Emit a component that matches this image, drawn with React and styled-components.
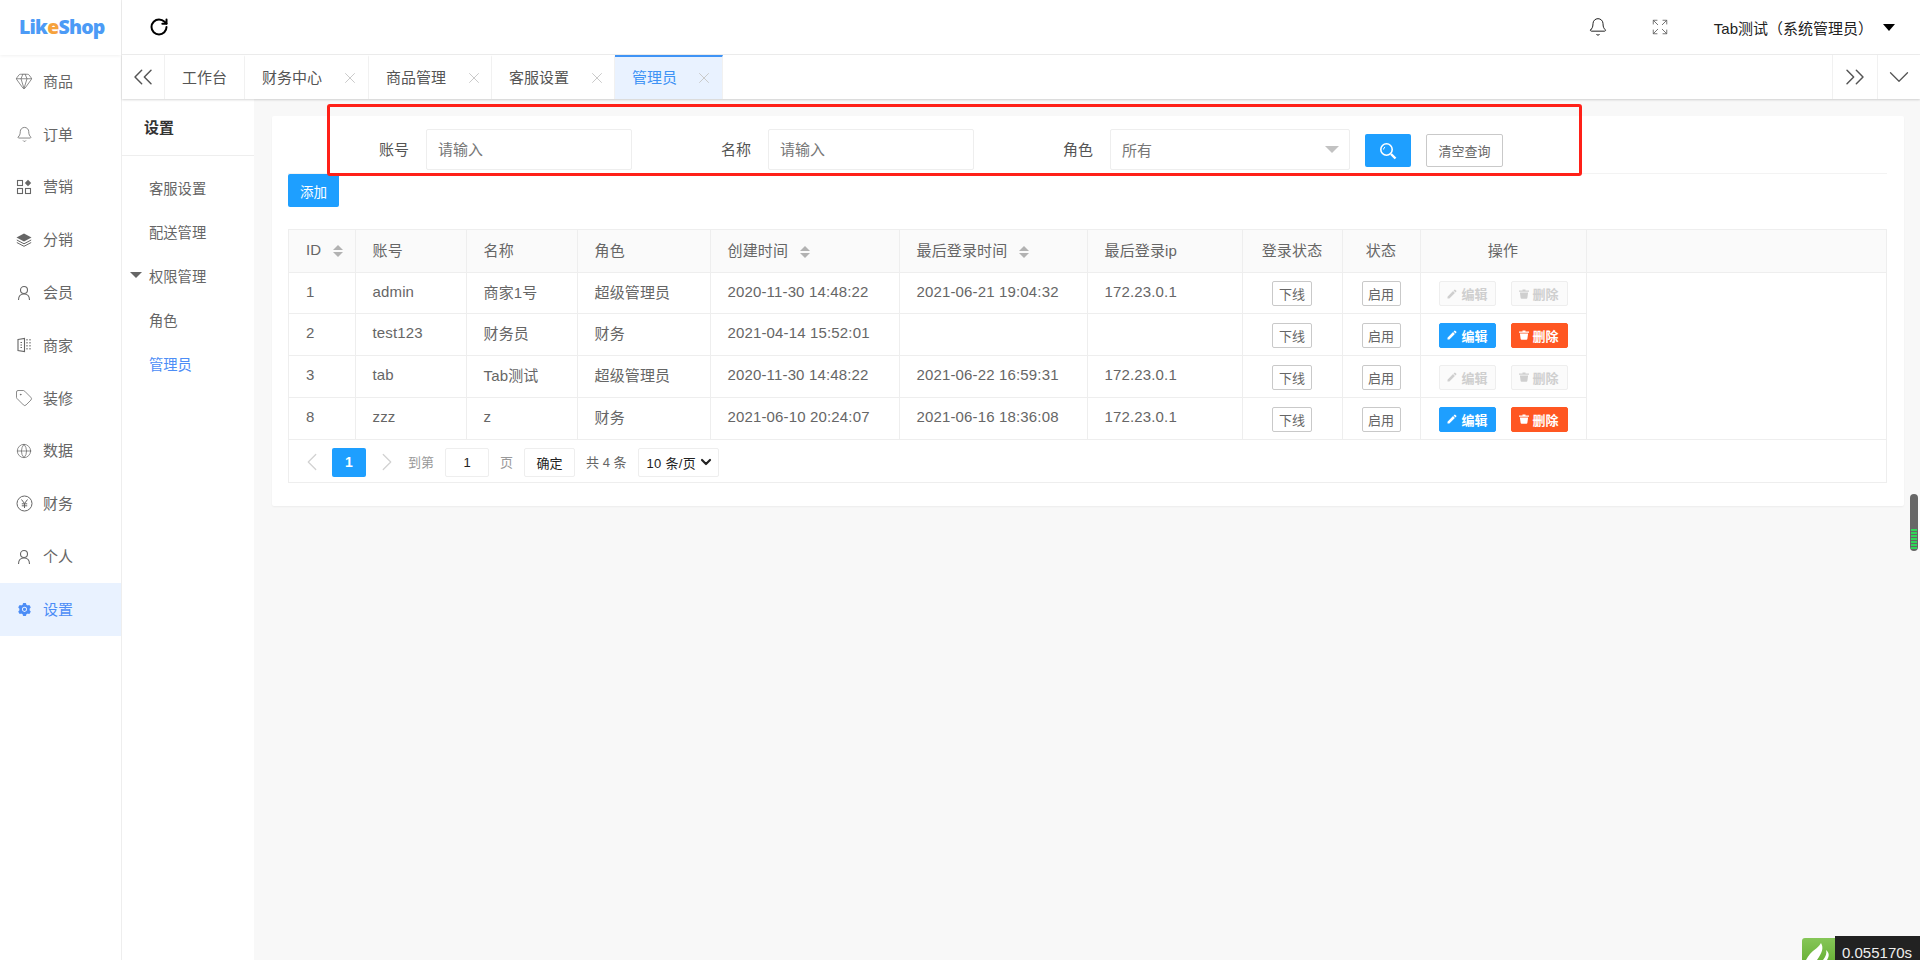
import React from "react";
import styled, { createGlobalStyle } from "styled-components";
import {
  Gem,
  Bell,
  Tag,
  Globe,
  RotateCw,
  Expand,
  ChevronDown,
  ChevronsLeft,
  ChevronsRight,
  ChevronLeft,
  ChevronRight,
  X,
} from "lucide-react";
import { AiFillSetting } from "react-icons/ai";
import { MdEdit } from "react-icons/md";

const GlobalStyle = createGlobalStyle`
  * { box-sizing: border-box; }
  html, body { margin: 0; height: 100%; }
  body {
    font-family: "Liberation Sans", "Noto Sans CJK SC", sans-serif;
    font-size: 15px;
    color: #666;
    background: #f8f8f8;
    overflow: hidden;
  }
  #root { height: 100%; }
`;

const Page = styled.div`
  position: relative;
  display: flex;
  width: 1920px;
  height: 960px;
  overflow: hidden;
`;

const Side = styled.aside`
  width: 122px;
  flex-shrink: 0;
  background: #fff;
  border-right: 1px solid #eee;
  display: flex;
  flex-direction: column;
`;

const Logo = styled.div`
  height: 55px;
  padding: 0 0 2px 19px;
  display: flex;
  align-items: center;
  font-family: "Open Sans", "Liberation Sans", sans-serif;
  font-size: 19.5px;
  font-weight: 800;
  letter-spacing: -0.8px;
  color: #4c9bf6;
  box-shadow: 0 1px 3px rgba(0, 0, 0, 0.06);
  span { color: #f6a23c; }
`;

const SideItem = styled.div`
  height: 52.8px;
  display: flex;
  align-items: center;
  gap: 11px;
  padding-left: 16px;
  color: ${(p) => (p.$active ? "#4c8df6" : "#666")};
  background: ${(p) => (p.$active ? "#e9f2ff" : "transparent")};
`;

const SideIcon = styled.span`
  width: 16px;
  display: flex;
  justify-content: center;
  svg { flex-shrink: 0; }
`;

const SideText = styled.span`
  padding-bottom: 2px;
`;

const Main = styled.div`
  flex: 1;
  min-width: 0;
  display: flex;
  flex-direction: column;
`;

const Header = styled.header`
  height: 55px;
  background: #fff;
  border-bottom: 1px solid #eee;
  display: flex;
  align-items: center;
  padding-left: 27px;
  color: #000;
`;

const Spacer = styled.div`
  flex: 1;
`;

const HeaderIcon = styled.div`
  display: flex;
  margin-right: ${(p) => p.$gap}px;
  color: ${(p) => p.$color || "#222"};
`;

const UserName = styled.div`
  font-size: 15px;
  color: #222;
`;

const Caret = styled.div`
  width: 0;
  height: 0;
  margin: 0 25px 0 10px;
  border-left: 6px solid transparent;
  border-right: 6px solid transparent;
  border-top: 7px solid #000;
`;

const TabBar = styled.div`
  height: 44px;
  background: #fff;
  display: flex;
  box-shadow: 0 1px 2px rgba(0, 0, 0, 0.16);
  position: relative;
  z-index: 1;
`;

const TabButton = styled.div`
  width: ${(p) => p.$w}px;
  display: flex;
  align-items: center;
  justify-content: center;
  color: #555;
  border-right: ${(p) => (p.$right ? "none" : "1px solid #f1f1f1")};
  border-left: ${(p) => (p.$right ? "1px solid #f1f1f1" : "none")};
`;

const Tab = styled.div`
  width: ${(p) => p.$w}px;
  display: flex;
  align-items: center;
  padding: 0 0 4px 17px;
  color: ${(p) => (p.$active ? "#3f93f5" : "#555")};
  background: ${(p) => (p.$active ? "#e9f2ff" : "#fff")};
  border-right: 1px solid #f1f1f1;
  border-top: 2px solid ${(p) => (p.$active ? "#3f93f5" : "#fff")};
  svg {
    margin: 3px 0 0 ${(p) => (p.$active ? 18 : 19)}px;
    color: #c8c8c8;
  }
`;

const Body = styled.div`
  flex: 1;
  min-height: 0;
  display: flex;
`;

const SubSide = styled.nav`
  width: 132px;
  flex-shrink: 0;
  background: #fff;
  font-size: 14.3px;
`;

const SubTitle = styled.div`
  height: 57px;
  padding: 0 0 2px 22px;
  display: flex;
  align-items: center;
  font-size: 15px;
  font-weight: 700;
  color: #333;
  border-bottom: 1px solid #eee;
`;

const SubList = styled.div`
  padding-top: 9px;
`;

const SubItem = styled.div`
  height: 44px;
  padding-left: 27px;
  display: flex;
  align-items: center;
  position: relative;
  color: ${(p) => (p.$active ? "#4c8df6" : "#666")};
`;

const SubArrow = styled.i`
  position: absolute;
  left: 8px;
  top: 19px;
  border-left: 6px solid transparent;
  border-right: 6px solid transparent;
  border-top: 6px solid #666;
`;

const Content = styled.main`
  flex: 1;
  min-width: 0;
  padding: 17px 16px 0 18px;
`;

const Card = styled.section`
  height: 390px;
  background: #fff;
  border-radius: 2px;
  box-shadow: 0 1px 2px rgba(0, 0, 0, 0.05);
  padding: 13px 17px 0 16px;
`;

const SearchRow = styled.form`
  height: 45px;
  display: flex;
  align-items: flex-start;
  border-bottom: 1px solid #f3f3f3;
  margin: 0;
`;

const Field = styled.div`
  display: flex;
  align-items: center;
`;

const Label = styled.label`
  width: ${(p) => p.$w}px;
  padding: 0 17px 3px 0;
  text-align: right;
  font-size: 15px;
  color: #555;
`;

const Input = styled.input`
  width: 206px;
  height: 41px;
  padding: 0 11px;
  border: 1px solid #eee;
  border-radius: 2px;
  outline: none;
  font: inherit;
  font-size: 15px;
  color: #666;
  &::placeholder { color: #777; opacity: 1; }
`;

const Select = styled.div`
  width: 240px;
  height: 41px;
  padding: 0 10px 0 11px;
  border: 1px solid #eee;
  border-radius: 2px;
  display: flex;
  align-items: center;
  justify-content: space-between;
  font-size: 15px;
  color: #777;
`;

const SelectCaret = styled.i`
  border-left: 7px solid transparent;
  border-right: 7px solid transparent;
  border-top: 7px solid #c2c2c2;
`;

const SearchButton = styled.button`
  width: 46px;
  height: 33px;
  margin: 5px 15px 0 15px;
  padding: 0;
  border: none;
  border-radius: 2px;
  background: #1e9fff;
  color: #fff;
  display: flex;
  align-items: center;
  justify-content: center;
`;

const ClearButton = styled.button`
  width: 77px;
  height: 33px;
  margin-top: 5px;
  padding: 0;
  border: 1px solid #c9c9c9;
  border-radius: 2px;
  background: #fff;
  font: inherit;
  font-size: 13px;
  color: #666;
`;

const AddButton = styled.button`
  display: block;
  width: 51px;
  height: 33px;
  padding: 0;
  border: none;
  border-radius: 2px;
  background: #1e9fff;
  font: inherit;
  font-size: 13.5px;
  color: #fff;
`;

const TableBox = styled.div`
  margin-top: 22px;
  border: 1px solid #eee;
`;

const Table = styled.table`
  width: 100%;
  table-layout: fixed;
  border-collapse: collapse;
  letter-spacing: 0.15px;
  tbody tr:first-child td { height: 41px; }
  tbody tr:last-child td { border-bottom: none; }
`;

const Th = styled.th`
  height: 42px;
  padding: ${(p) => (p.$center ? "0 0 3px" : "0 17px 3px")};
  font-weight: 400;
  text-align: ${(p) => (p.$center ? "center" : "left")};
  white-space: nowrap;
  color: #666;
  background: #fafafa;
  border-right: ${(p) => (p.$last ? "none" : "1px solid #eee")};
  border-bottom: 1px solid #eee;
`;

const Td = styled.td`
  height: 42px;
  padding: ${(p) => (p.$center ? "2px 0 0" : "0 17px 3px")};
  text-align: ${(p) => (p.$center ? "center" : "left")};
  white-space: nowrap;
  color: #666;
  border-right: 1px solid #eee;
  border-bottom: 1px solid #eee;
`;

const BlankTd = styled.td`
  border: none;
`;

const Sort = styled.span`
  display: inline-flex;
  flex-direction: column;
  gap: 2px;
  margin-left: 12px;
  vertical-align: middle;
  i {
    border-left: 5.5px solid transparent;
    border-right: 5.5px solid transparent;
  }
  i:first-child { border-bottom: 5px solid #b2b2b2; }
  i:last-child { border-top: 5px solid #b2b2b2; }
`;

const SmallButton = styled.button`
  height: 25px;
  width: ${(p) => p.$w}px;
  padding: 0;
  border: 1px solid #c9c9c9;
  border-radius: 2px;
  background: #fff;
  font: inherit;
  font-size: 13px;
  color: #666;
`;

const OpRow = styled.div`
  display: flex;
  gap: 15px;
  padding-left: 18px;
`;

const OpButton = styled.button`
  flex-shrink: 0;
  width: 57px;
  height: 25px;
  padding: 0;
  border: 1px solid ${(p) => (p.$off ? "#eee" : p.$bg)};
  border-radius: 2px;
  background: ${(p) => (p.$off ? "#fbfbfb" : p.$bg)};
  color: ${(p) => (p.$off ? "#cfcfcf" : "#fff")};
  font: inherit;
  font-size: 13px;
  font-weight: 700;
  display: flex;
  align-items: center;
  justify-content: center;
  gap: 3px;
`;

const Pager = styled.div`
  height: 43px;
  padding: 2px 0 0 7px;
  display: flex;
  align-items: center;
  border-top: 1px solid #eee;
  font-size: 13px;
  color: #666;
`;

const PagerArrow = styled.span`
  display: flex;
  width: 32px;
  justify-content: center;
  color: #d2d2d2;
  margin-right: ${(p) => p.$gap}px;
`;

const PageNum = styled.span`
  width: 34px;
  height: 29px;
  margin-right: 5px;
  border-radius: 2px;
  background: #1e9fff;
  color: #fff;
  font-weight: 700;
  font-size: 14px;
  display: flex;
  align-items: center;
  justify-content: center;
`;

const PagerText = styled.span`
  margin-right: 11px;
  padding-bottom: 2px;
  color: ${(p) => p.$color || "#999"};
`;

const PagerBox = styled.span`
  height: 29px;
  width: ${(p) => p.$w}px;
  margin-right: 11px;
  border: 1px solid #eee;
  border-radius: 2px;
  background: #fff;
  color: #222;
  display: flex;
  align-items: center;
  justify-content: ${(p) => (p.$between ? "space-between" : "center")};
  padding: ${(p) => (p.$between ? "0 4px 0 8px" : "0")};
  letter-spacing: ${(p) => (p.$between ? "0.3px" : "0")};
`;

const Overlay = styled.div`
  position: absolute;
  left: 327px;
  top: 104px;
  width: 1255px;
  height: 72px;
  border: 3px solid #ff2018;
  border-radius: 3px;
  pointer-events: none;
  z-index: 2;
`;

const Meter = styled.div`
  position: absolute;
  left: 1910px;
  top: 494px;
  width: 8px;
  height: 57px;
  border-radius: 4px;
  background: #666;
  overflow: hidden;
  z-index: 2;
`;

const MeterFill = styled.div`
  position: absolute;
  left: 1px;
  right: 1px;
  bottom: 1px;
  height: 21px;
  background: repeating-linear-gradient(
    to bottom,
    #30d658 0 1.8px,
    #666 1.8px 3px
  );
`;

const Trace = styled.div`
  position: absolute;
  right: 0;
  bottom: 0;
  display: flex;
  align-items: flex-end;
  z-index: 2;
`;

const TraceLogo = styled.div`
  width: 33px;
  height: 22px;
  background: linear-gradient(#86c658, #6bb339);
  border-radius: 3px 0 0 0;
  display: flex;
`;

const TraceTime = styled.div`
  width: 85px;
  height: 24px;
  background: #222;
  color: #eee;
  font-size: 15px;
  line-height: 33px;
  padding-left: 7px;
  overflow: hidden;
`;

function UserIcon() {
  return (
    <svg width="16" height="16" viewBox="0 0 16 16" fill="none" stroke="currentColor" strokeWidth="1.1">
      <circle cx="8" cy="5" r="3.5" />
      <path d="M2.5 15c0-3.6 2.2-6 5.5-6s5.5 2.4 5.5 6" />
    </svg>
  );
}

function MarketIcon() {
  return (
    <svg width="16" height="16" viewBox="0 0 16 16" fill="none" stroke="currentColor" strokeWidth="1.1">
      <rect x="1.5" y="1.5" width="5" height="5" />
      <rect x="1.5" y="9.5" width="5" height="5" />
      <rect x="9.5" y="9.5" width="5" height="5" />
      <path d="M12 0.8 15.2 4 12 7.2 8.8 4Z" fill="currentColor" stroke="none" />
    </svg>
  );
}

function StackIcon() {
  return (
    <svg width="16" height="16" viewBox="0 0 16 16" fill="none" stroke="currentColor" strokeWidth="1">
      <path d="M8 1.5 15.5 5.5 8 9.5 0.5 5.5Z" fill="currentColor" stroke="none" />
      <path d="M0.8 8 8 11.8 15.2 8M0.8 10.5 8 14.3 15.2 10.5" />
    </svg>
  );
}

function ShopIcon() {
  return (
    <svg width="16" height="16" viewBox="0 0 16 16" fill="none" stroke="currentColor" strokeWidth="1.1">
      <path d="M2 2.5 8.5 1.5V14.5L2 13.5Z" />
      <path d="M4.5 5.5H6M4.5 8H6M4.5 10.5H6" />
      <path d="M11 2V14M14 2V14" strokeDasharray="1.5 1.5" />
    </svg>
  );
}

function YenIcon() {
  return (
    <svg width="17" height="17" viewBox="0 0 17 17" fill="none" stroke="currentColor" strokeWidth="1">
      <circle cx="8.5" cy="8.5" r="7.5" />
      <path d="M5.5 4.5 8.5 8.5 11.5 4.5M8.5 8.5V13M5.8 8.8H11.2M5.8 10.8H11.2" />
    </svg>
  );
}

function SearchIcon() {
  return (
    <svg width="18" height="18" viewBox="0 0 18 18" fill="none" stroke="currentColor">
      <circle cx="7.5" cy="7.5" r="5.7" strokeWidth="1.6" />
      <path d="M4.6 7.5a3 3 0 0 1 1.5-2.6" strokeWidth="1" />
      <path d="M12 12 16.5 16.5" strokeWidth="2.4" />
    </svg>
  );
}

function TrashIcon() {
  return (
    <svg width="10" height="10" viewBox="0 0 10 10" fill="currentColor">
      <path d="M3.5 0.5h3v1h3.5v1.2H0V1.5h3.5Z" />
      <path d="M0.9 3.5h8.2l-0.7 5.3a1 1 0 0 1-1 0.9H2.6a1 1 0 0 1-1-0.9Z" />
    </svg>
  );
}

function TraceMark() {
  return (
    <svg width="33" height="22" viewBox="0 0 33 22">
      <path d="M4 22C9 12 16 11 19 5 22 10 20 15 15 22Z" fill="#fff" />
      <path d="M21 22C24 18 25 15 24 12 28 15 27 19 25 22Z" fill="#fff" />
    </svg>
  );
}

const menu = [
  ["商品", <Gem size={18} strokeWidth={1} />],
  ["订单", <Bell size={17} strokeWidth={1.1} />],
  ["营销", <MarketIcon />],
  ["分销", <StackIcon />],
  ["会员", <UserIcon />],
  ["商家", <ShopIcon />],
  ["装修", <Tag size={18} strokeWidth={1} />],
  ["数据", <Globe size={16} strokeWidth={1.1} />],
  ["财务", <YenIcon />],
  ["个人", <UserIcon />],
  ["设置", <AiFillSetting size={15} />, true],
];

const tabs = [
  ["财务中心", 124],
  ["商品管理", 123],
  ["客服设置", 123],
];

const cols = [66, 111, 111, 133, 189, 188, 155, 100, 78, 166];

const rows = [
  ["1", "admin", "商家1号", "超级管理员", "2020-11-30 14:48:22", "2021-06-21 19:04:32", "172.23.0.1", true],
  ["2", "test123", "财务员", "财务", "2021-04-14 15:52:01", "", "", false],
  ["3", "tab", "Tab测试", "超级管理员", "2020-11-30 14:48:22", "2021-06-22 16:59:31", "172.23.0.1", true],
  ["8", "zzz", "z", "财务", "2021-06-10 20:24:07", "2021-06-16 18:36:08", "172.23.0.1", false],
];

function SortMark() {
  return (
    <Sort>
      <i />
      <i />
    </Sort>
  );
}

export default function App() {
  return (
    <Page>
      <GlobalStyle />
      <Side>
        <Logo>
          Lik<span>e</span>Shop
        </Logo>
        {menu.map(([name, icon, active]) => (
          <SideItem key={name} $active={active}>
            <SideIcon>{icon}</SideIcon>
            <SideText>{name}</SideText>
          </SideItem>
        ))}
      </Side>
      <Main>
        <Header>
          <RotateCw size={20} strokeWidth={2.4} />
          <Spacer />
          <HeaderIcon $gap={43}>
            <Bell size={20} strokeWidth={1.2} />
          </HeaderIcon>
          <HeaderIcon $gap={45} $color="#666">
            <Expand size={18} strokeWidth={1.2} />
          </HeaderIcon>
          <UserName>Tab测试（系统管理员）</UserName>
          <Caret />
        </Header>
        <TabBar>
          <TabButton $w={43}>
            <ChevronsLeft size={32} strokeWidth={1.1} />
          </TabButton>
          <Tab $w={80}>工作台</Tab>
          {tabs.map(([name, w]) => (
            <Tab key={name} $w={w}>
              {name}
              <X size={18} strokeWidth={1.3} />
            </Tab>
          ))}
          <Tab $w={108} $active>
            管理员
            <X size={18} strokeWidth={1.3} />
          </Tab>
          <Spacer />
          <TabButton $w={45} $right>
            <ChevronsRight size={32} strokeWidth={1.1} />
          </TabButton>
          <TabButton $w={43} $right>
            <ChevronDown size={34} strokeWidth={0.9} />
          </TabButton>
        </TabBar>
        <Body>
          <SubSide>
            <SubTitle>设置</SubTitle>
            <SubList>
              <SubItem>客服设置</SubItem>
              <SubItem>配送管理</SubItem>
              <SubItem>
                <SubArrow />
                权限管理
              </SubItem>
              <SubItem>角色</SubItem>
              <SubItem $active>管理员</SubItem>
            </SubList>
          </SubSide>
          <Content>
            <Card>
              <SearchRow>
                <Field>
                  <Label $w={138}>账号</Label>
                  <Input placeholder="请输入" />
                </Field>
                <Field>
                  <Label $w={136}>名称</Label>
                  <Input placeholder="请输入" />
                </Field>
                <Field>
                  <Label $w={136}>角色</Label>
                  <Select>
                    所有
                    <SelectCaret />
                  </Select>
                </Field>
                <SearchButton type="button">
                  <SearchIcon />
                </SearchButton>
                <ClearButton type="button">清空查询</ClearButton>
              </SearchRow>
              <AddButton type="button">添加</AddButton>
              <TableBox>
                <Table>
                  <colgroup>
                    {cols.map((w, i) => (
                      <col key={i} style={{ width: w }} />
                    ))}
                    <col />
                  </colgroup>
                  <thead>
                    <tr>
                      <Th>
                        ID
                        <SortMark />
                      </Th>
                      <Th>账号</Th>
                      <Th>名称</Th>
                      <Th>角色</Th>
                      <Th>
                        创建时间
                        <SortMark />
                      </Th>
                      <Th>
                        最后登录时间
                        <SortMark />
                      </Th>
                      <Th>最后登录ip</Th>
                      <Th $center>登录状态</Th>
                      <Th $center>状态</Th>
                      <Th $center>操作</Th>
                      <Th $last />
                    </tr>
                  </thead>
                  <tbody>
                    {rows.map((r) => (
                      <tr key={r[0]}>
                        {r.slice(0, 7).map((v, i) => (
                          <Td key={i}>{v}</Td>
                        ))}
                        <Td $center>
                          <SmallButton $w={40}>下线</SmallButton>
                        </Td>
                        <Td $center>
                          <SmallButton $w={39}>启用</SmallButton>
                        </Td>
                        <Td $center>
                          <OpRow>
                            <OpButton $off={r[7]} $bg="#1e9fff">
                              <MdEdit size={12} />
                              编辑
                            </OpButton>
                            <OpButton $off={r[7]} $bg="#ff5722">
                              <TrashIcon />
                              删除
                            </OpButton>
                          </OpRow>
                        </Td>
                        <BlankTd />
                      </tr>
                    ))}
                  </tbody>
                </Table>
                <Pager>
                  <PagerArrow $gap={4}>
                    <ChevronLeft size={30} strokeWidth={1} />
                  </PagerArrow>
                  <PageNum>1</PageNum>
                  <PagerArrow $gap={5}>
                    <ChevronRight size={30} strokeWidth={1} />
                  </PagerArrow>
                  <PagerText>到第</PagerText>
                  <PagerBox $w={44}>1</PagerBox>
                  <PagerText>页</PagerText>
                  <PagerBox $w={51}>确定</PagerBox>
                  <PagerText $color="#666">共 4 条</PagerText>
                  <PagerBox $w={81} $between>
                    10 条/页
                    <ChevronDown size={16} strokeWidth={3.2} />
                  </PagerBox>
                </Pager>
              </TableBox>
            </Card>
          </Content>
        </Body>
      </Main>
      <Overlay />
      <Meter>
        <MeterFill />
      </Meter>
      <Trace>
        <TraceLogo>
          <TraceMark />
        </TraceLogo>
        <TraceTime>0.055170s</TraceTime>
      </Trace>
    </Page>
  );
}
